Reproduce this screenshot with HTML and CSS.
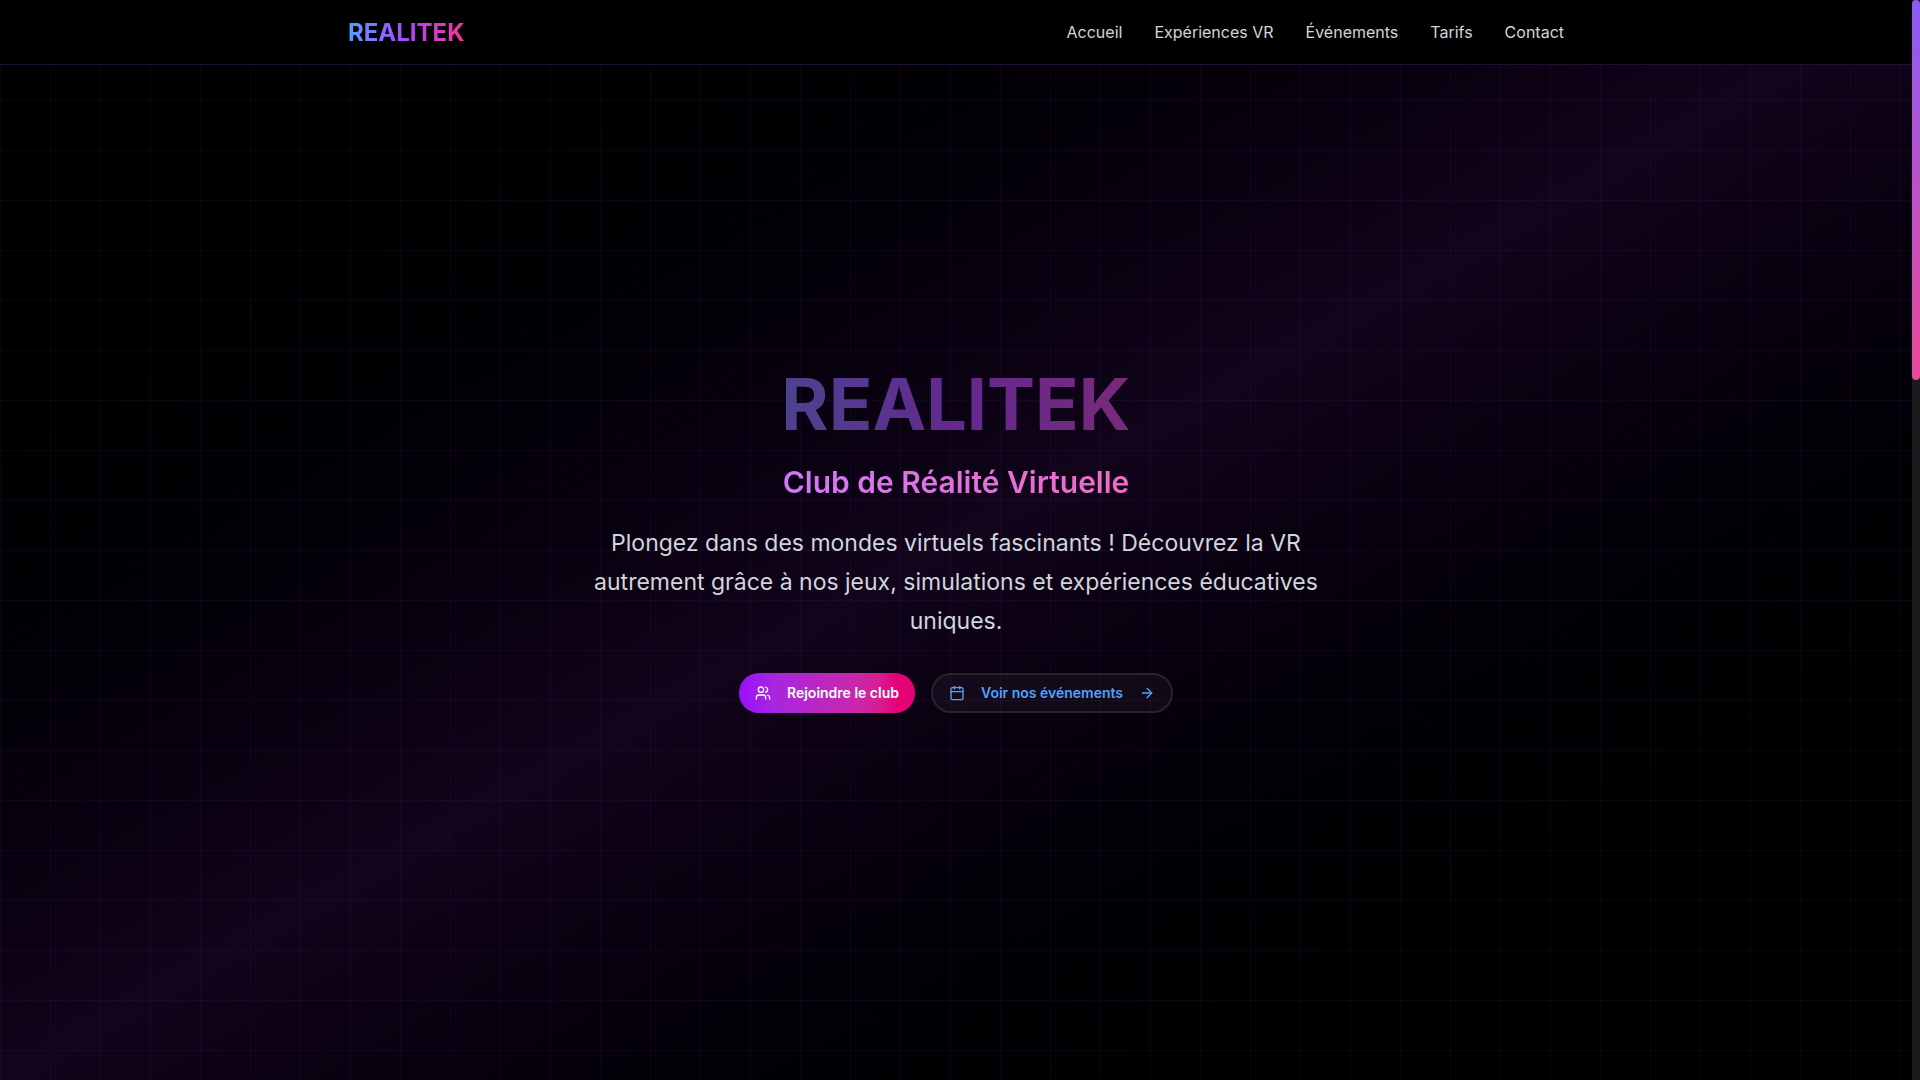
FILE: index.html
```html
<!DOCTYPE html>
<html lang="fr">
<head>
<meta charset="UTF-8" />
<meta name="viewport" content="width=device-width, initial-scale=1" />
<title>REALITEK - Club de Réalité Virtuelle</title>
<link rel="stylesheet" href="styles.css">
</head>
<body>

<div class="page">
  <header class="header">
    <div class="container">
      <a class="logo" href="#accueil">REALITEK</a>
      <nav class="nav">
        <a href="#accueil">Accueil</a>
        <a href="#experiences">Expériences VR</a>
        <a href="#evenements">Événements</a>
        <a href="#tarifs">Tarifs</a>
        <a href="#contact">Contact</a>
      </nav>
    </div>
  </header>

  <main class="hero" id="accueil">
    <h1 class="title">REALITEK</h1>
    <h2 class="subtitle">Club de Réalité Virtuelle</h2>
    <p class="description">Plongez dans des mondes virtuels fascinants&nbsp;! Découvrez la VR autrement grâce à nos jeux, simulations et expériences éducatives uniques.</p>

    <div class="actions">
      <button class="btn btn-primary" type="button">
        <svg class="icon" viewBox="0 0 24 24" aria-hidden="true">
          <path d="M16 21v-2a4 4 0 0 0-4-4H6a4 4 0 0 0-4 4v2" />
          <circle cx="9" cy="7" r="4" />
          <path d="M22 21v-2a4 4 0 0 0-3-3.87" />
          <path d="M16 3.13a4 4 0 0 1 0 7.75" />
        </svg>
        Rejoindre le club
      </button>
      <button class="btn btn-outline" type="button">
        <svg class="icon" viewBox="0 0 24 24" aria-hidden="true">
          <path d="M8 2v4" />
          <path d="M16 2v4" />
          <rect width="18" height="18" x="3" y="4" rx="2" />
          <path d="M3 10h18" />
        </svg>
        Voir nos événements
        <svg class="icon" viewBox="0 0 24 24" aria-hidden="true">
          <path d="M5 12h14" />
          <path d="m12 5 7 7-7 7" />
        </svg>
      </button>
    </div>
  </main>
</div>

<div class="scroll-track">
  <div class="scroll-thumb"></div>
</div>

</body>
</html>
```
FILE: styles.css
```css
* {
  box-sizing: border-box;
}

body {
  margin: 0;
  min-height: 100vh;
  display: flex;
  background: #000;
  color: #fff;
  font-family: Inter, 'Liberation Sans', sans-serif;
}

/* Dark gradient with the purple band across the middle */
.page {
  flex: 1;
  display: grid;
  background: linear-gradient(to bottom right in oklab, #000, rgba(89, 22, 139, 0.2), #000);
}

/* Header and hero share the same cell, the header lies over the top */
.header,
.hero {
  grid-area: 1 / 1;
}

.header {
  align-self: start;
  z-index: 1;
  background: rgba(0, 0, 0, 0.9);
  border-bottom: 1px solid rgba(173, 70, 255, 0.2);
}

.container {
  display: flex;
  align-items: center;
  justify-content: space-between;
  max-width: 1280px;
  height: 64px;
  margin: 0 auto;
  padding: 0 32px;
}

.logo {
  font-size: 24px;
  font-weight: 700;
  text-decoration: none;
  color: transparent;
  background: linear-gradient(to right, #51a2ff, #ad46ff, #f6339a);
  -webkit-background-clip: text;
  background-clip: text;
}

.nav {
  display: flex;
  gap: 32px;
}

.nav a {
  color: #d1d5dc;
  font-size: 16px;
  line-height: 24px;
  text-decoration: none;
}

.nav a:hover {
  color: #c27aff;
}

/* Hero */
.hero {
  display: flex;
  flex-direction: column;
  align-items: center;
  justify-content: center;
  text-align: center;
  background-image:
    linear-gradient(rgba(139, 92, 246, 0.06) 1px, transparent 1px),
    linear-gradient(90deg, rgba(139, 92, 246, 0.06) 1px, transparent 1px);
  background-size: 50px 50px;
}

.title,
.subtitle {
  color: transparent;
  -webkit-background-clip: text;
  background-clip: text;
}

.title {
  margin: 0 0 24px;
  font-size: 72px;
  line-height: 72px;
  font-weight: 700;
  background-image: linear-gradient(to right, #4d438f, #64288f, #782a7a);
}

.subtitle {
  margin: 0 0 24px;
  font-size: 30px;
  line-height: 36px;
  font-weight: 600;
  background-image: linear-gradient(to right, #cf78fa, #f06bc2);
}

.description {
  max-width: 768px;
  margin: 0 0 32px;
  font-size: 23px;
  line-height: 39px;
  color: #d1d5dc;
}

.actions {
  display: flex;
  gap: 16px;
}

.btn {
  display: flex;
  align-items: center;
  gap: 16px;
  height: 40px;
  padding: 0 16px;
  border: none;
  border-radius: 20px;
  font-family: inherit;
  font-size: 14px;
  font-weight: 600;
  cursor: pointer;
}

.btn-primary {
  color: #fff;
  background: linear-gradient(to right, #9810fa, #a826e0 20%, #c928a8 68%, #d81c90 80%, #e60076 90%);
}

.btn-outline {
  color: #51a2ff;
  background: rgba(255, 255, 255, 0.04);
  border: 2px solid #262626;
}

.icon {
  width: 16px;
  height: 16px;
  fill: none;
  stroke: currentColor;
  stroke-width: 2;
  stroke-linecap: round;
  stroke-linejoin: round;
}

/* Scrollbar */
.scroll-track {
  width: 8px;
  background: #1a1a1a;
}

.scroll-thumb {
  height: 380px;
  border-radius: 4px;
  background: linear-gradient(#8b5cf6, #ec4899);
}
```
